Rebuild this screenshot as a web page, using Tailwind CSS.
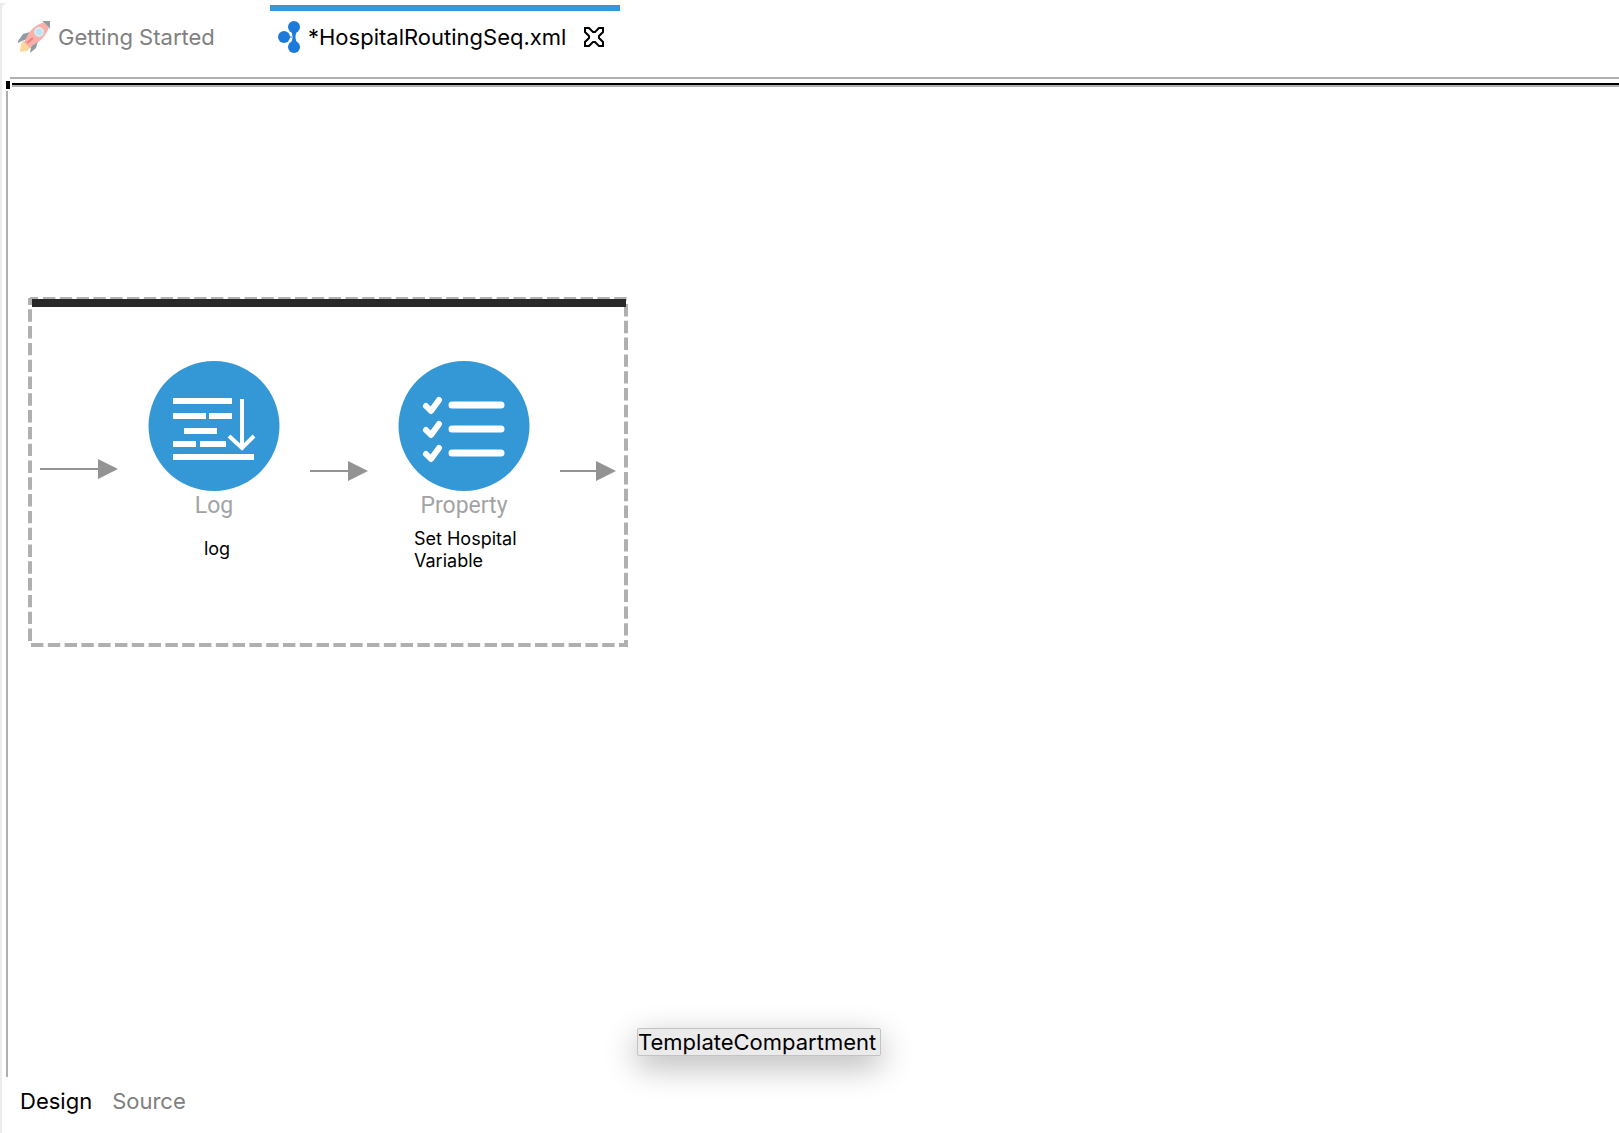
<!DOCTYPE html>
<html lang="en">
<head>
<meta charset="utf-8">
<title>HospitalRoutingSeq.xml</title>
<script src="https://cdn.jsdelivr.net/npm/@tailwindcss/browser@4"></script>
</head>
<body class="flex min-h-screen flex-col bg-white pt-[3px] font-['Inter','Liberation_Sans',sans-serif] text-[22px] leading-7 text-black">
<div class="flex grow flex-col bg-[#ececec] pl-0.5">
<div class="flex grow flex-col rounded-tl-md bg-white pl-1">

  <header class="flex h-[74px] items-start pt-0.5" role="tablist">
    <button role="tab" aria-selected="false" class="flex h-16 w-[264px] items-center gap-2 pl-3 text-[#808080]">
      <svg class="size-8 shrink-0" viewBox="0 0 32 32" aria-hidden="true">
        <path d="M0 20 5 13 12 11 9 18 4 20 0 22ZM20 20 18 27 12 32 13 26 15 21Z" fill="#909ba5"/>
        <path d="M5 20 3 23 2 31 9 30 13 26 11 20Z" fill="#fbd79b"/>
        <path d="M8 18C11 9 18 2 32 0 31 12 24 20 15 24L12 27 6 21Z" fill="#fab0a8"/>
        <path d="M24 0H32V8C30 5 27 2 24 0Z" fill="#909ba5"/>
        <path d="m9 22 6-5" stroke="#e5847e" stroke-width="2"/>
        <circle cx="21" cy="11" r="4" fill="#b9e5fa" stroke="#d9e7ee" stroke-width="2"/>
      </svg>
      <span>Getting Started</span>
    </button>
    <button role="tab" aria-selected="true" class="flex h-16 w-[350px] items-center border-t-[6px] border-[#3498db] pb-1.5 pl-2">
      <svg class="h-8 w-[22px] shrink-0" viewBox="0 0 22 32" aria-hidden="true">
        <g fill="#1c7ada"><circle cx="16" cy="6" r="6"/><circle cx="6" cy="16" r="6"/><circle cx="16" cy="26" r="6"/></g>
        <path d="M13 10c2 5 2 7 0 12h6c-2-5-2-7 0-12Z" fill="#1c7ada"/>
        <path d="M11 16h3" stroke="#1c7ada" stroke-opacity=".5" stroke-width="2"/>
      </svg>
      <span class="pl-2">*HospitalRoutingSeq.xml</span>
      <svg class="ml-[18px] size-5 shrink-0" viewBox="0 0 20 20" fill="none" stroke="#000" stroke-width="2" aria-label="Close">
        <path d="M1 1H5L9 5H11L15 1H19V5L15 9V11L19 15V19H15L11 15H9L5 19H1V15L5 11V9L1 5Z"/>
      </svg>
    </button>
  </header>

  <main class="flex grow flex-col">
    <div class="ml-1 h-0.5 bg-[#b0b0b0]"></div>
    <div class="flex h-3 items-start pt-0.5">
      <div class="h-2 w-1 bg-black"></div>
      <div class="ml-0.5 mt-0.5 h-1 grow border-b-2 border-[#b0b0b0] bg-black"></div>
    </div>
    <div class="relative min-h-[700px] grow border-l-2 border-[#b0b0b0]">
      <section class="absolute left-5 top-[206px] h-[350px] w-[600px]" aria-label="Sequence">
        <svg class="absolute inset-0 size-full" viewBox="0 0 600 350" aria-hidden="true">
          <g stroke="#b0b0b0" stroke-width="4" fill="none">
            <path d="M2 8V1M2 1H10"/>
            <path d="M15 2H600" stroke-dasharray="12.4 4.4"/>
            <path d="M2 12.3V345" stroke-dasharray="12.4 4.4"/>
            <path d="M598 7V346" stroke-dasharray="12.4 4.4"/>
            <path d="M3 348H600" stroke-dasharray="12.4 4.4"/>
            <path d="M598 343V350"/>
          </g>
          <rect x="4" y="2" width="594" height="8" fill="#282828"/>
          <g fill="#939393">
            <path d="M12 171H70V162L90 172 70 182V173H12Z"/>
            <path d="M282 173H320V164L340 174 320 184V175H282Z"/>
            <path d="M532 173H568V164L588 174 568 184V175H532Z"/>
          </g>
        </svg>

        <div class="absolute left-[120px] top-16 flex w-[132px] flex-col items-center">
          <svg class="h-[130px] w-[132px]" viewBox="0 0 132 130" aria-hidden="true">
            <ellipse cx="66" cy="65" rx="65.5" ry="65" fill="#3598d6"/>
            <g fill="#fff">
              <path d="M25 37H84V43H25ZM25 52H58V58H25ZM61 52H84V58H61ZM36 67H69V73H36ZM25 80H48V86H25ZM52 80H78V86H52ZM25 93H106V99H25Z"/>
            </g>
            <path d="M94 38V87M81 75 94 87 106 75" fill="none" stroke="#fff" stroke-width="4"/>
          </svg>
          <span class="font-[Roboto,sans-serif] text-[23px] leading-[30px] text-[#a3a3a5]">Log</span>
          <span class="ml-1.5 mt-[17px] text-lg leading-[22px]">log</span>
        </div>

        <div class="absolute left-[370px] top-16 flex w-[132px] flex-col items-center">
          <svg class="h-[130px] w-[132px]" viewBox="0 0 132 130" aria-hidden="true">
            <ellipse cx="66" cy="65" rx="65.5" ry="65" fill="#3598d6"/>
            <g fill="none" stroke="#fff" stroke-width="6" stroke-linecap="round" stroke-linejoin="round">
              <path d="m28 45 5 5 8-11M28 69l5 5 8-11M28 93l5 5 8-11"/>
              <path d="M54 44H103M54 68H103M54 92H103" stroke-width="7"/>
            </g>
          </svg>
          <span class="font-[Roboto,sans-serif] text-[23px] leading-[30px] text-[#a3a3a5]">Property</span>
          <span class="ml-2.5 mt-[7px] w-[110px] text-lg leading-[22px]">Set Hospital Variable</span>
        </div>
      </section>

      <div role="tooltip" class="absolute bottom-[21px] left-[629px] h-7 w-[244px] whitespace-nowrap rounded-xs border border-[#c4c3c4] bg-[#ecebec] leading-[26px] shadow-[0_10px_32px_rgb(0_0_0/0.3)]">TemplateCompartment</div>
    </div>
  </main>

  <footer class="flex h-14 items-start gap-5 pl-3.5 pt-2.5" role="tablist">
    <button role="tab" aria-selected="true">Design</button>
    <button role="tab" aria-selected="false" class="text-[#808080]">Source</button>
  </footer>
</div>
</div>
</body>
</html>
